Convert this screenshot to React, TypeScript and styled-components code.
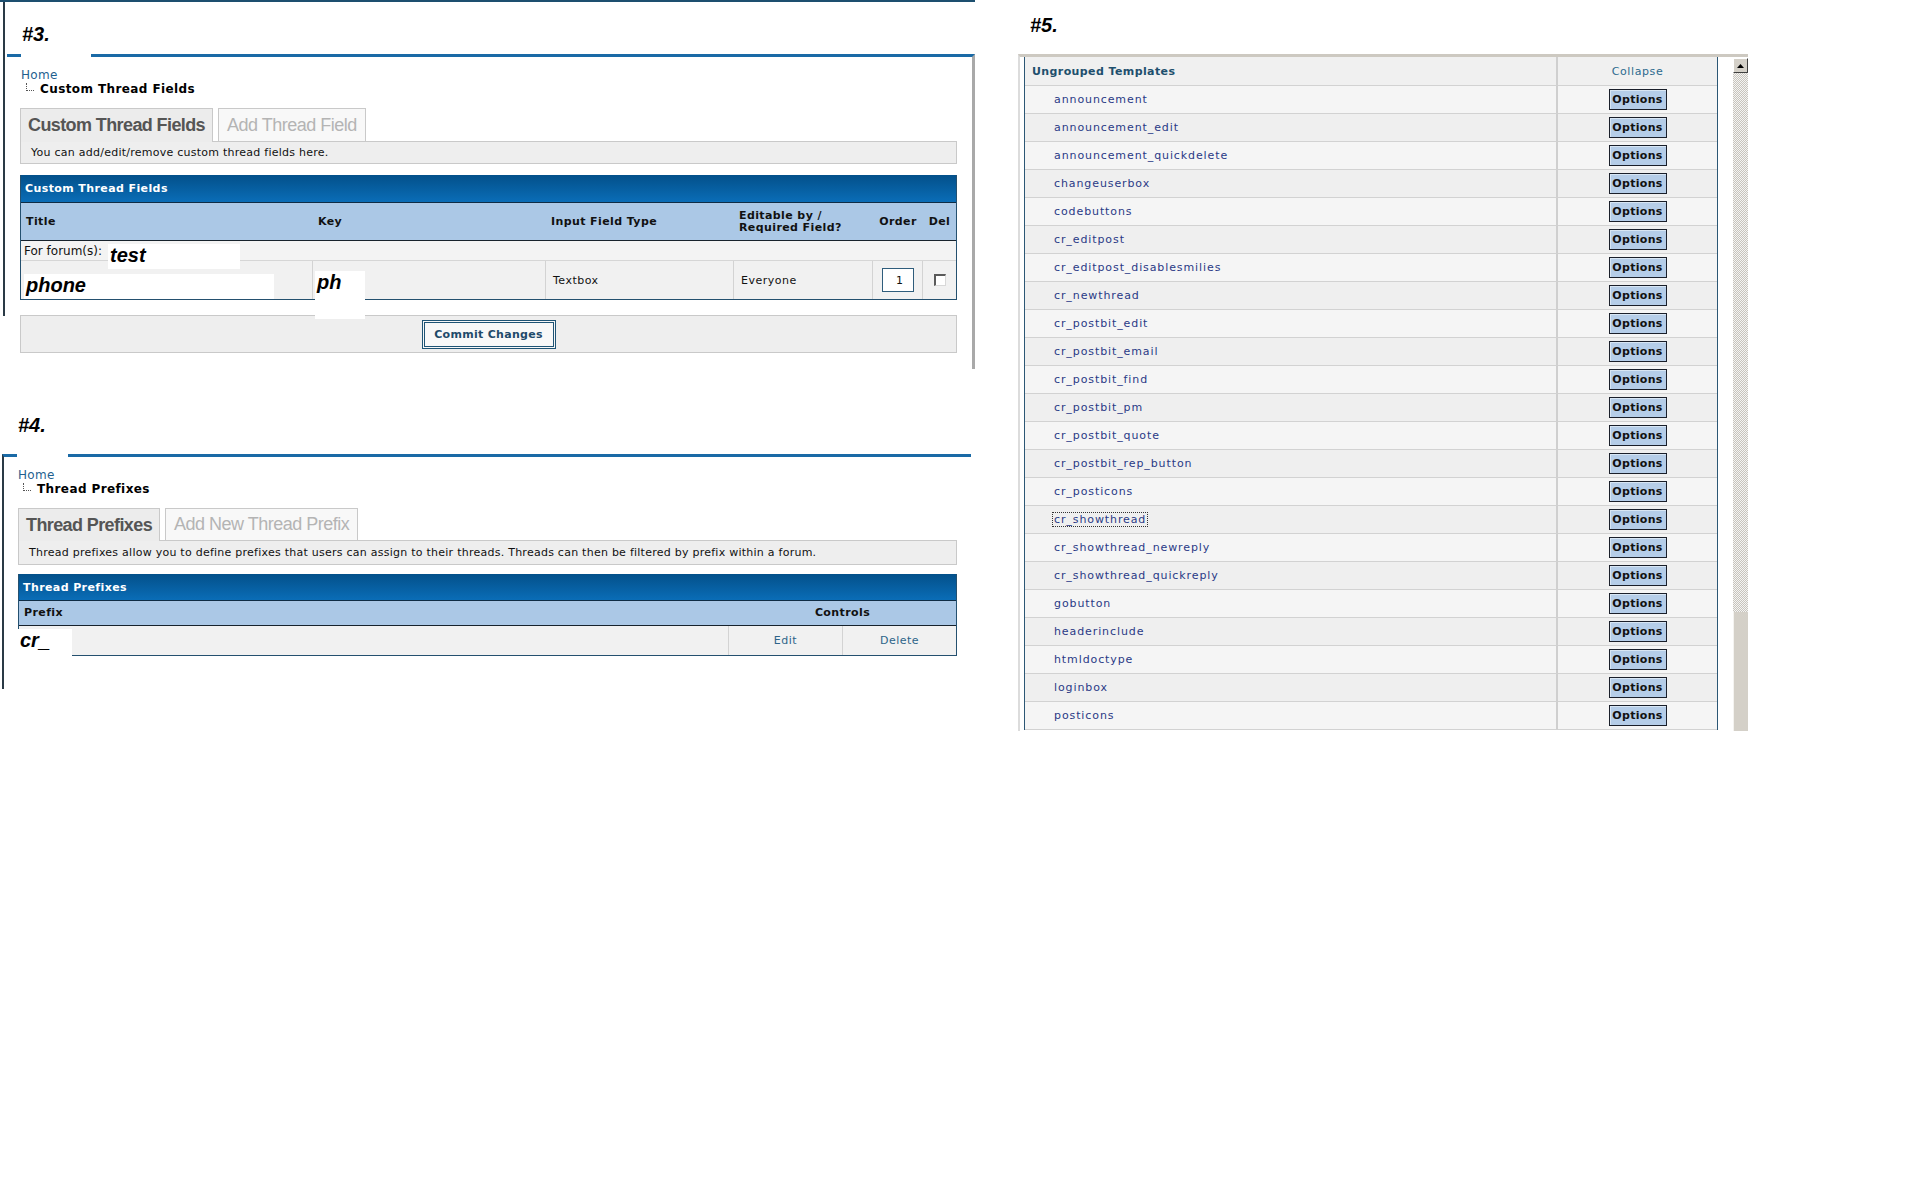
import React from "react";
import styled, { createGlobalStyle } from "styled-components";

const GlobalStyle = createGlobalStyle`
  html, body {
    margin: 0;
    padding: 0;
    background: #ffffff;
  }
  body {
    font-family: "DejaVu Sans", Verdana, sans-serif;
    color: #111;
  }
`;

const Page = styled.div`
  display: flex;
  align-items: flex-start;
  width: 1920px;
  height: 1200px;
  overflow: hidden;
  background: #fff;
`;

const LeftColumn = styled.div`
  width: 975px;
  display: flex;
  flex-direction: column;
`;

const Shot = styled.section<{ $topLine?: boolean; $sideLine?: number }>`
  position: relative;
  border-top: ${(p) => (p.$topLine ? "2px solid #1d4f6f" : "none")};
  ${(p) =>
    p.$sideLine
      ? `&::before {
          content: "";
          position: absolute;
          left: 3px;
          top: 0;
          width: 2px;
          height: ${p.$sideLine}px;
          background: #2a3a46;
        }`
      : ""}
`;

const ShotLabel = styled.div<{ $left: number; $top: number }>`
  margin: ${(p) => p.$top}px 0 0 ${(p) => p.$left}px;
  font: italic bold 20px/20px "Liberation Sans", Arial, sans-serif;
  color: #000;
`;

const RuleFrame = styled.div<{ $mt: number; $ml: number; $mr: number; $pl: number; $pr: number; $pb: number; $rightLine?: boolean; $leftLine?: boolean }>`
  position: relative;
  margin: ${(p) => p.$mt}px ${(p) => p.$mr}px 0 ${(p) => p.$ml}px;
  padding: 11px ${(p) => p.$pr}px ${(p) => p.$pb}px ${(p) => p.$pl}px;
  border-top: 3px solid #1a6aa6;
  border-right: ${(p) => (p.$rightLine ? "3px solid #a9a9a9" : "none")};
  border-left: ${(p) => (p.$leftLine ? "2px solid #2a3a46" : "none")};
`;

const RuleGap = styled.div<{ $left: number; $width: number }>`
  position: absolute;
  top: -3px;
  left: ${(p) => p.$left}px;
  width: ${(p) => p.$width}px;
  height: 3px;
  background: #fff;
`;

const Crumbs = styled.div<{ $pl: number }>`
  padding-left: ${(p) => p.$pl}px;
  font-size: 12px;
  line-height: 14px;
  letter-spacing: 0.3px;
`;

const CrumbLink = styled.div`
  color: #1f5f8f;
`;

const CrumbCurrent = styled.div`
  display: flex;
  align-items: flex-start;
  font-weight: bold;
  letter-spacing: 0.4px;
  color: #000;
`;

const TreeMark = styled.span`
  display: inline-block;
  width: 7px;
  height: 7px;
  margin: 1px 6px 0 5px;
  border-left: 1px dotted #555;
  border-bottom: 1px dotted #555;
`;

const TabRow = styled.div<{ $h: number }>`
  display: flex;
  align-items: flex-end;
  gap: 5px;
  margin-top: 12px;
  height: ${(p) => p.$h}px;
`;

const Tab = styled.div<{ $active?: boolean }>`
  position: relative;
  z-index: ${(p) => (p.$active ? 1 : 0)};
  box-sizing: border-box;
  height: ${(p) => (p.$active ? "calc(100% + 1px)" : "100%")};
  margin-bottom: ${(p) => (p.$active ? "-1px" : "0")};
  display: flex;
  align-items: center;
  padding: 0 ${(p) => (p.$active ? 7 : 8)}px;
  border: 1px solid #c9c9c9;
  border-bottom: none;
  background: ${(p) => (p.$active ? "#ececec" : "#f8f8f8")};
  color: ${(p) => (p.$active ? "#555" : "#b4b4b4")};
  font-family: "Liberation Sans", Arial, sans-serif;
  font-size: 18px;
  font-weight: ${(p) => (p.$active ? "bold" : "normal")};
  letter-spacing: ${(p) => (p.$active ? "-0.6px" : "-0.5px")};
`;

const Description = styled.div<{ $h: number }>`
  box-sizing: border-box;
  height: ${(p) => p.$h}px;
  display: flex;
  align-items: center;
  padding-left: 10px;
  border: 1px solid #c9c9c9;
  background: #eeeeee;
  font-size: 11px;
  letter-spacing: 0.25px;
  color: #111;
`;

const Grid = styled.div<{ $cols: string; $mt: number }>`
  display: grid;
  grid-template-columns: ${(p) => p.$cols};
  margin-top: ${(p) => p.$mt}px;
  border: 1px solid #24506f;
  border-top: none;
`;

const TitleBar = styled.div<{ $h: number }>`
  grid-column: 1 / -1;
  box-sizing: border-box;
  height: ${(p) => p.$h}px;
  display: flex;
  align-items: center;
  padding-left: 4px;
  background: linear-gradient(#03508a, #0a6db7);
  border-bottom: 1px solid #0f2c44;
  color: #fff;
  font-size: 11px;
  font-weight: bold;
  letter-spacing: 0.4px;
`;

const HeadCell = styled.div<{ $h: number; $center?: boolean; $span?: number }>`
  grid-column: span ${(p) => p.$span || 1};
  box-sizing: border-box;
  height: ${(p) => p.$h}px;
  display: flex;
  align-items: center;
  justify-content: ${(p) => (p.$center ? "center" : "flex-start")};
  padding: 0 5px;
  background: #abc8e6;
  border-bottom: 1px solid #17222c;
  font-size: 11px;
  font-weight: bold;
  line-height: 12px;
  letter-spacing: 0.4px;
  color: #111;
`;

const FullRow = styled.div<{ $h: number }>`
  grid-column: 1 / -1;
  position: relative;
  box-sizing: border-box;
  height: ${(p) => p.$h}px;
  display: flex;
  align-items: center;
  padding-left: 3px;
  background: #f3f3f3;
  border-bottom: 1px solid #d6d6d6;
  font-size: 12px;
`;

const Cell = styled.div<{ $h: number; $center?: boolean; $last?: boolean; $link?: boolean }>`
  position: relative;
  box-sizing: border-box;
  height: ${(p) => p.$h}px;
  display: flex;
  align-items: center;
  justify-content: ${(p) => (p.$center ? "center" : "flex-start")};
  padding: 0 7px;
  background: #f1f1f1;
  border-right: ${(p) => (p.$last ? "none" : "1px solid #d3d3d3")};
  font-size: 11px;
  letter-spacing: 0.5px;
  color: ${(p) => (p.$link ? "#2d6489" : "#111")};
`;

const Redaction = styled.div<{ $l: number; $t: number; $w: number; $h: number }>`
  position: absolute;
  z-index: 2;
  left: ${(p) => p.$l}px;
  top: ${(p) => p.$t}px;
  width: ${(p) => p.$w}px;
  height: ${(p) => p.$h}px;
  box-sizing: border-box;
  padding-left: 2px;
  background: #fff;
  font: italic bold 20px/22px "Liberation Sans", Arial, sans-serif;
  letter-spacing: 0;
  color: #000;
`;

const OrderBox = styled.div`
  box-sizing: border-box;
  width: 32px;
  height: 24px;
  display: flex;
  align-items: center;
  justify-content: flex-end;
  padding-right: 9px;
  border: 1px solid #2f5d7c;
  background: #fff;
  font-size: 11px;
`;

const CheckBox = styled.span`
  box-sizing: border-box;
  width: 12px;
  height: 12px;
  background: #fff;
  border-top: 2px solid #5a5a5a;
  border-left: 2px solid #5a5a5a;
  border-right: 1px solid #d8d8d8;
  border-bottom: 1px solid #d8d8d8;
`;

const SubmitBar = styled.div`
  box-sizing: border-box;
  margin-top: 15px;
  height: 38px;
  display: flex;
  align-items: center;
  justify-content: center;
  border: 1px solid #c9c9c9;
  background: #eeeeee;
`;

const SubmitButton = styled.button`
  box-sizing: border-box;
  width: 134px;
  height: 29px;
  padding: 0;
  border: 3px double #1f5475;
  background: #f8f8f8;
  color: #1f4a6a;
  font-family: "DejaVu Sans", Verdana, sans-serif;
  font-size: 11px;
  font-weight: bold;
  letter-spacing: 0.3px;
`;

/* #5 */

const RightColumn = styled.div`
  margin-left: 40px;
  width: 733px;
  display: flex;
  flex-direction: column;
`;

const TemplateFrame = styled.div`
  margin-top: 19px;
  margin-left: 3px;
  display: flex;
  align-items: flex-start;
  gap: 15px;
  padding-left: 4px;
  border-top: 3px solid #cdc9c1;
  border-left: 2px solid #dcdcdc;
`;

const TemplateTable = styled.div`
  display: grid;
  grid-template-columns: 533px 159px;
  border-left: 1px solid #2c5775;
  border-right: 1px solid #2c5775;
`;

const TplCell = styled.div<{ $h: number; $alt?: boolean; $action?: boolean }>`
  box-sizing: border-box;
  height: ${(p) => p.$h}px;
  display: flex;
  align-items: center;
  justify-content: ${(p) => (p.$action ? "center" : "flex-start")};
  padding-left: ${(p) => (p.$action ? 0 : 28)}px;
  background: ${(p) => (p.$alt ? "#efefef" : "#f5f5f5")};
  border-bottom: 1px solid #d2d2d2;
  border-right: ${(p) => (p.$action ? "none" : "2px solid #cfcfcf")};
  font-size: 11px;
  letter-spacing: 0.9px;
  color: #2a3a86;
`;

const TplHeadCell = styled(TplCell)`
  padding-left: ${(p) => (p.$action ? 0 : 7)}px;
  background: #f0f0f0;
  font-weight: ${(p) => (p.$action ? "normal" : "bold")};
  letter-spacing: ${(p) => (p.$action ? "0.6px" : "0.4px")};
  color: ${(p) => (p.$action ? "#2c6a8e" : "#1e4f6d")};
`;

const TplName = styled.span<{ $focus?: boolean }>`
  padding: 0 1px;
  outline: ${(p) => (p.$focus ? "1px dotted #333" : "none")};
`;

const OptionsButton = styled.span`
  box-sizing: border-box;
  width: 58px;
  height: 21px;
  display: flex;
  align-items: center;
  justify-content: center;
  background: #b5cde8;
  border: 1px solid #1a1f2a;
  box-shadow: inset 1px 1px 0 #d8e6f4;
  font-size: 11px;
  font-weight: bold;
  letter-spacing: 0.3px;
  color: #111;
`;

const ScrollBar = styled.div`
  margin-top: 1px;
  width: 15px;
  display: flex;
  flex-direction: column;
`;

const ScrollArrow = styled.div`
  box-sizing: border-box;
  height: 15px;
  display: flex;
  align-items: center;
  justify-content: center;
  background: #d4d0c8;
  border-top: 1px solid #fff;
  border-left: 1px solid #fff;
  border-right: 1px solid #404040;
  border-bottom: 1px solid #404040;
`;

const ScrollTrack = styled.div`
  height: 539px;
  background: repeating-conic-gradient(#c8c4bc 0 25%, #f4f4f4 0 50%) 0 0 / 2px 2px;
`;

const ScrollThumb = styled.div`
  box-sizing: border-box;
  height: 119px;
  background: #d4d0c8;
  border-left: 1px solid #f4f3f0;
`;

const templates = [
  "announcement",
  "announcement_edit",
  "announcement_quickdelete",
  "changeuserbox",
  "codebuttons",
  "cr_editpost",
  "cr_editpost_disablesmilies",
  "cr_newthread",
  "cr_postbit_edit",
  "cr_postbit_email",
  "cr_postbit_find",
  "cr_postbit_pm",
  "cr_postbit_quote",
  "cr_postbit_rep_button",
  "cr_posticons",
  "cr_showthread",
  "cr_showthread_newreply",
  "cr_showthread_quickreply",
  "gobutton",
  "headerinclude",
  "htmldoctype",
  "loginbox",
  "posticons",
];

const App: React.FC = () => {
  return (
    <>
      <GlobalStyle />
      <Page>
        <LeftColumn>
          {/* #3 */}
          <Shot $topLine $sideLine={314}>
            <ShotLabel $left={22} $top={22}>#3.</ShotLabel>
            <RuleFrame $mt={10} $ml={7} $mr={0} $pl={13} $pr={15} $pb={16} $rightLine>
              <RuleGap $left={14} $width={70} />
              <Crumbs $pl={1}>
                <CrumbLink>Home</CrumbLink>
                <CrumbCurrent>
                  <TreeMark />
                  Custom Thread Fields
                </CrumbCurrent>
              </Crumbs>
              <TabRow $h={33}>
                <Tab $active>Custom Thread Fields</Tab>
                <Tab>Add Thread Field</Tab>
              </TabRow>
              <Description $h={23}>You can add/edit/remove custom thread fields here.</Description>

              <Grid $mt={11} $cols="292px 233px 188px 139px 50px 33px">
                <TitleBar $h={28}>Custom Thread Fields</TitleBar>
                <HeadCell $h={38}>Title</HeadCell>
                <HeadCell $h={38}>Key</HeadCell>
                <HeadCell $h={38}>Input Field Type</HeadCell>
                <HeadCell $h={38}>
                  Editable by /<br />
                  Required Field?
                </HeadCell>
                <HeadCell $h={38} $center>Order</HeadCell>
                <HeadCell $h={38} $center>Del</HeadCell>

                <FullRow $h={20}>
                  For forum(s):
                  <Redaction $l={87} $t={3} $w={132} $h={25}>test</Redaction>
                </FullRow>

                <Cell $h={38}>
                  <Redaction $l={3} $t={13} $w={250} $h={25}>phone</Redaction>
                </Cell>
                <Cell $h={38}>
                  <Redaction $l={2} $t={10} $w={50} $h={48}>ph</Redaction>
                </Cell>
                <Cell $h={38}>Textbox</Cell>
                <Cell $h={38}>Everyone</Cell>
                <Cell $h={38} $center>
                  <OrderBox>1</OrderBox>
                </Cell>
                <Cell $h={38} $center $last>
                  <CheckBox />
                </Cell>
              </Grid>

              <SubmitBar>
                <SubmitButton type="button">Commit Changes</SubmitButton>
              </SubmitBar>
            </RuleFrame>
          </Shot>

          {/* #4 */}
          <Shot>
            <ShotLabel $left={18} $top={46}>#4.</ShotLabel>
            <RuleFrame $mt={19} $ml={2} $mr={4} $pl={14} $pr={14} $pb={33} $leftLine>
              <RuleGap $left={13} $width={51} />
              <Crumbs $pl={0}>
                <CrumbLink>Home</CrumbLink>
                <CrumbCurrent>
                  <TreeMark />
                  Thread Prefixes
                </CrumbCurrent>
              </Crumbs>
              <TabRow $h={32}>
                <Tab $active>Thread Prefixes</Tab>
                <Tab>Add New Thread Prefix</Tab>
              </TabRow>
              <Description $h={25}>
                Thread prefixes allow you to define prefixes that users can assign to their threads. Threads can then be filtered by prefix within a forum.
              </Description>

              <Grid $mt={9} $cols="710px 114px 113px">
                <TitleBar $h={27}>Thread Prefixes</TitleBar>
                <HeadCell $h={25}>Prefix</HeadCell>
                <HeadCell $h={25} $center $span={2}>Controls</HeadCell>
                <Cell $h={29}>
                  <Redaction $l={-1} $t={3} $w={54} $h={30}>cr_</Redaction>
                </Cell>
                <Cell $h={29} $center $link>Edit</Cell>
                <Cell $h={29} $center $link $last>Delete</Cell>
              </Grid>
            </RuleFrame>
          </Shot>
        </LeftColumn>

        {/* #5 */}
        <RightColumn>
          <ShotLabel $left={15} $top={15}>#5.</ShotLabel>
          <TemplateFrame>
            <TemplateTable>
              <TplHeadCell $h={29}>Ungrouped Templates</TplHeadCell>
              <TplHeadCell $h={29} $action>Collapse</TplHeadCell>
              {templates.map((name, i) => (
                <React.Fragment key={name}>
                  <TplCell $h={28} $alt={i % 2 === 1}>
                    <TplName $focus={name === "cr_showthread"}>{name}</TplName>
                  </TplCell>
                  <TplCell $h={28} $alt={i % 2 === 1} $action>
                    <OptionsButton>Options</OptionsButton>
                  </TplCell>
                </React.Fragment>
              ))}
            </TemplateTable>
            <ScrollBar>
              <ScrollArrow>
                <svg width="7" height="4" viewBox="0 0 7 4">
                  <path d="M3.5 0 L7 4 L0 4 Z" fill="#000" />
                </svg>
              </ScrollArrow>
              <ScrollTrack />
              <ScrollThumb />
            </ScrollBar>
          </TemplateFrame>
        </RightColumn>
      </Page>
    </>
  );
};

export default App;
